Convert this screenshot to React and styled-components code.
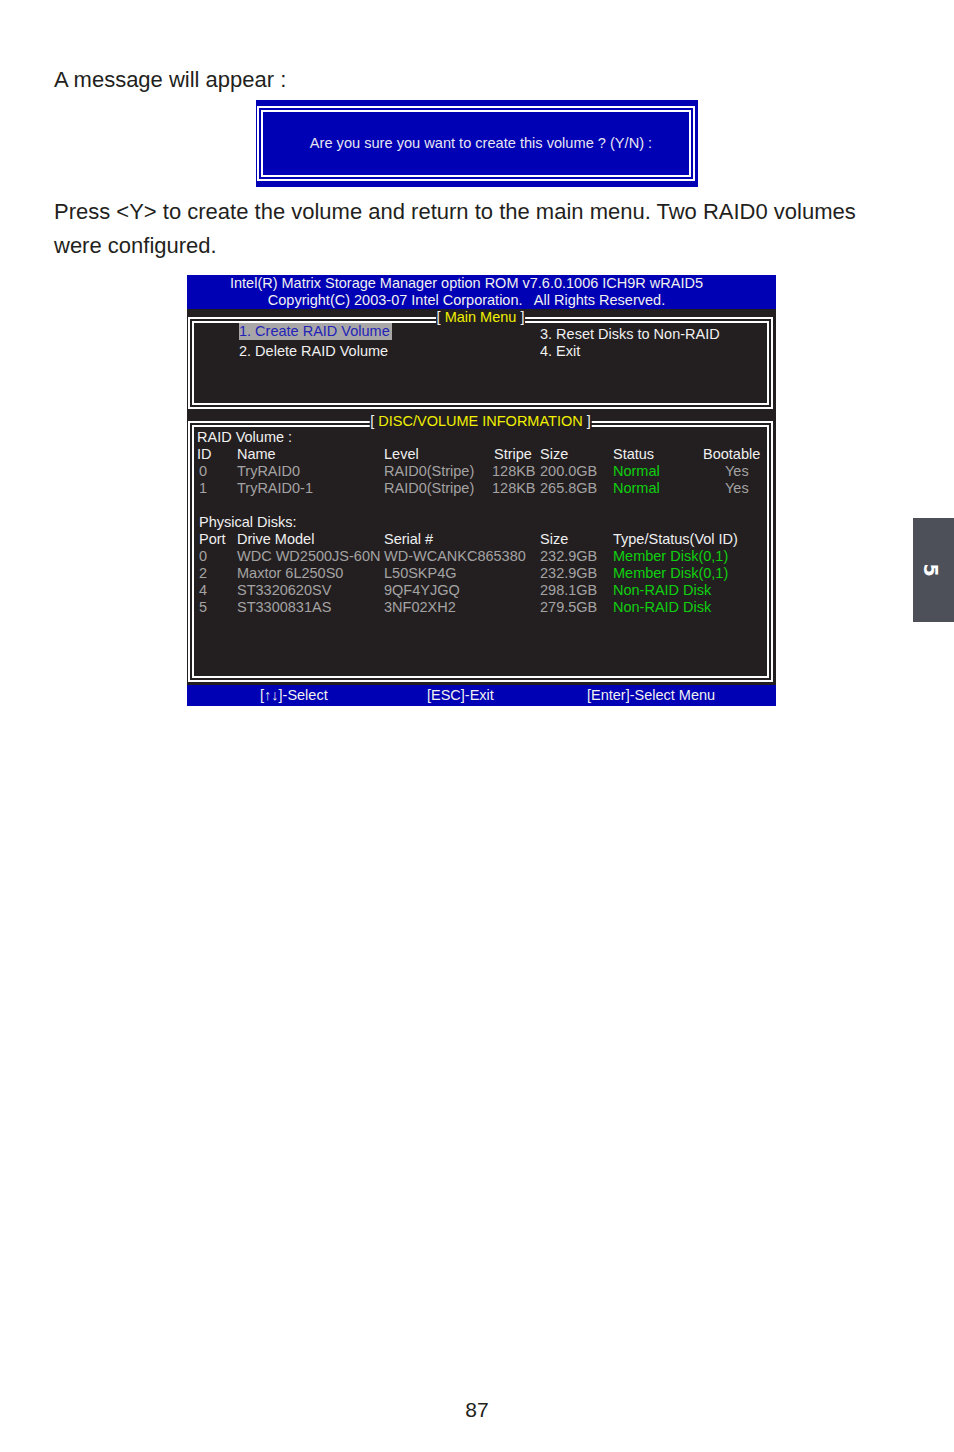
import React from "react";
import styled, { createGlobalStyle } from "styled-components";

const GlobalStyle = createGlobalStyle`
  body {
    margin: 0;
    background: #ffffff;
    font-family: "Liberation Sans", Arial, sans-serif;
  }
`;

const BLUE = "#0000b4";
const DARK = "#231f20";
const WHITE = "#f0f0f0";
const GRAY = "#a3a3a3";
const GREEN = "#0fcf0f";
const YELLOW = "#f0f000";

const Page = styled.div`
  position: relative;
  width: 954px;
  height: 1452px;
  box-sizing: border-box;
  padding: 67px 54px 30px 54px;
  display: flex;
  flex-direction: column;
  color: #231f20;
`;

const Text = styled.p`
  margin: ${(p) => p.$top || 0}px 0 0 0;
  font-size: 22px;
  line-height: ${(p) => p.$lh || 25}px;
`;

const Dialog = styled.div`
  align-self: center;
  margin-top: 8px;
  width: 442px;
  box-sizing: border-box;
  background: ${BLUE};
  padding: 6px 3px 6px 1px;
`;

const Frame = styled.div`
  position: relative;
  border: 2px solid ${(p) => p.$line || "#ffffff"};
  padding: 2px;
`;

const FrameInner = styled.div`
  border: 2px solid ${(p) => p.$line || "#ffffff"};
  box-sizing: border-box;
  height: ${(p) => (p.$h ? `${p.$h}px` : "auto")};
  padding: ${(p) => p.$pad || "0"};
`;

const DialogText = styled.div`
  box-sizing: border-box;
  height: 63px;
  display: flex;
  align-items: center;
  justify-content: center;
  padding: 0 0 2px 10px;
  color: #e6e6f2;
  font-size: 14.6px;
`;

const Screen = styled.div`
  align-self: center;
  margin: 13px 0 0 9px;
  width: 589px;
  background: ${DARK};
  color: ${WHITE};
  font-size: 14.5px;
`;

const Header = styled.div`
  background: ${BLUE};
  height: 34px;
  line-height: 17px;
  padding-right: 30px;
  text-align: center;
  white-space: pre;
`;

const Body = styled.div`
  padding: 8px 3px 3px 1px;
  display: flex;
  flex-direction: column;
  gap: 12px;
`;

const Title = styled.div`
  position: absolute;
  top: -10px;
  left: 50%;
  transform: translateX(-50%);
  line-height: 16px;
  padding: 0 1px;
  background: ${DARK};
  white-space: pre;
`;

const Accent = styled.span`
  color: ${YELLOW};
`;

const MenuGrid = styled.div`
  display: grid;
  grid-template-columns: 301px 1fr;
  padding-left: 45px;
`;

const MenuCol = styled.div`
  display: flex;
  flex-direction: column;
  gap: ${(p) => p.$gap || 0}px;
  padding-top: ${(p) => p.$top || 0}px;
`;

const MenuItem = styled.div`
  line-height: 17px;
  width: fit-content;
  padding: 0 2px 0 0;
  background: ${(p) => (p.$active ? "#a8a6a7" : "transparent")};
  color: ${(p) => (p.$active ? "#2323b8" : WHITE)};
`;

const Info = styled.div`
  padding-top: 2px;
`;

const Section = styled.div`
  padding-left: ${(p) => p.$left || 0}px;
`;

const Line = styled.div`
  height: 17px;
  line-height: 17px;
`;

const Row = styled.div`
  display: grid;
  grid-template-columns: ${(p) => p.$cols};
  height: 17px;
  line-height: 17px;
  white-space: nowrap;
`;

const tones = { head: WHITE, dim: GRAY, ok: GREEN };

const Cell = styled.span`
  color: ${(p) => tones[p.$tone || "head"]};
  padding-left: ${(p) => p.$shift || 0}px;
`;

const Footer = styled.div`
  background: ${BLUE};
  height: 21px;
  line-height: 21px;
  display: grid;
  grid-template-columns: 167px 160px 1fr;
  padding-left: 73px;
`;

const SideTab = styled.div`
  position: absolute;
  left: 913px;
  top: 518px;
  width: 41px;
  height: 104px;
  background: #4d5059;
  color: #ffffff;
  display: flex;
  align-items: center;
  justify-content: center;
  padding-right: 6px;
  box-sizing: border-box;
  font-family: "DejaVu Sans", sans-serif;
  font-weight: bold;
  font-size: 19px;
`;

const TabNum = styled.span`
  display: inline-block;
  transform: rotate(90deg);
`;

const PageNum = styled.div`
  margin-top: auto;
  text-align: center;
  font-size: 21px;
  line-height: 24px;
`;

const VOL_COLS = "40px 147px 108px 48px 73px 90px 1fr";
const DISK_COLS = "38px 147px 156px 73px 1fr";

const volumes = [
  ["0", "TryRAID0", "RAID0(Stripe)", "128KB", "200.0GB", "Normal", "Yes"],
  ["1", "TryRAID0-1", "RAID0(Stripe)", "128KB", "265.8GB", "Normal", "Yes"],
];

const disks = [
  ["0", "WDC WD2500JS-60N", "WD-WCANKC865380", "232.9GB", "Member Disk(0,1)"],
  ["2", "Maxtor 6L250S0", "L50SKP4G", "232.9GB", "Member Disk(0,1)"],
  ["4", "ST3320620SV", "9QF4YJGQ", "298.1GB", "Non-RAID Disk"],
  ["5", "ST3300831AS", "3NF02XH2", "279.5GB", "Non-RAID Disk"],
];

export default function App() {
  return (
    <>
      <GlobalStyle />
      <Page>
        <Text>A message will appear :</Text>

        <Dialog>
          <Frame>
            <FrameInner>
              <DialogText>Are you sure you want to create this volume ? (Y/N) :</DialogText>
            </FrameInner>
          </Frame>
        </Dialog>

        <Text $top={8} $lh={33.5}>
          Press &lt;Y&gt; to create the volume and return to the main menu. Two RAID0 volumes
          <br />
          were configured.
        </Text>

        <Screen>
          <Header>
            {"Intel(R) Matrix Storage Manager option ROM v7.6.0.1006 ICH9R wRAID5\nCopyright(C) 2003-07 Intel Corporation.   All Rights Reserved."}
          </Header>
          <Body>
            <Frame>
              <Title>
                [ <Accent>Main Menu</Accent> ]
              </Title>
              <FrameInner $h={84}>
                <MenuGrid>
                  <MenuCol $gap={3}>
                    <MenuItem $active>1. Create RAID Volume</MenuItem>
                    <MenuItem>2. Delete RAID Volume</MenuItem>
                  </MenuCol>
                  <MenuCol $top={3}>
                    <MenuItem>3. Reset Disks to Non-RAID</MenuItem>
                    <MenuItem>4. Exit</MenuItem>
                  </MenuCol>
                </MenuGrid>
              </FrameInner>
            </Frame>

            <Frame>
              <Title>
                [ <Accent>DISC/VOLUME INFORMATION</Accent> ]
              </Title>
              <FrameInner $h={253}>
                <Info>
                  <Section $left={3}>
                    <Line>RAID Volume :</Line>
                    <Row $cols={VOL_COLS}>
                      <Cell>ID</Cell>
                      <Cell>Name</Cell>
                      <Cell>Level</Cell>
                      <Cell $shift={2}>Stripe</Cell>
                      <Cell>Size</Cell>
                      <Cell>Status</Cell>
                      <Cell>Bootable</Cell>
                    </Row>
                    {volumes.map((v) => (
                      <Row key={v[0]} $cols={VOL_COLS}>
                        <Cell $tone="dim" $shift={2}>{v[0]}</Cell>
                        <Cell $tone="dim">{v[1]}</Cell>
                        <Cell $tone="dim">{v[2]}</Cell>
                        <Cell $tone="dim">{v[3]}</Cell>
                        <Cell $tone="dim">{v[4]}</Cell>
                        <Cell $tone="ok">{v[5]}</Cell>
                        <Cell $tone="dim" $shift={22}>{v[6]}</Cell>
                      </Row>
                    ))}
                    <Line />
                  </Section>
                  <Section $left={5}>
                    <Line>Physical Disks:</Line>
                    <Row $cols={DISK_COLS}>
                      <Cell>Port</Cell>
                      <Cell>Drive Model</Cell>
                      <Cell>Serial #</Cell>
                      <Cell>Size</Cell>
                      <Cell>Type/Status(Vol ID)</Cell>
                    </Row>
                    {disks.map((d) => (
                      <Row key={d[0]} $cols={DISK_COLS}>
                        <Cell $tone="dim">{d[0]}</Cell>
                        <Cell $tone="dim">{d[1]}</Cell>
                        <Cell $tone="dim">{d[2]}</Cell>
                        <Cell $tone="dim">{d[3]}</Cell>
                        <Cell $tone="ok">{d[4]}</Cell>
                      </Row>
                    ))}
                  </Section>
                </Info>
              </FrameInner>
            </Frame>
          </Body>
          <Footer>
            <span>[↑↓]-Select</span>
            <span>[ESC]-Exit</span>
            <span>[Enter]-Select Menu</span>
          </Footer>
        </Screen>

        <PageNum>87</PageNum>

        <SideTab>
          <TabNum>5</TabNum>
        </SideTab>
      </Page>
    </>
  );
}
